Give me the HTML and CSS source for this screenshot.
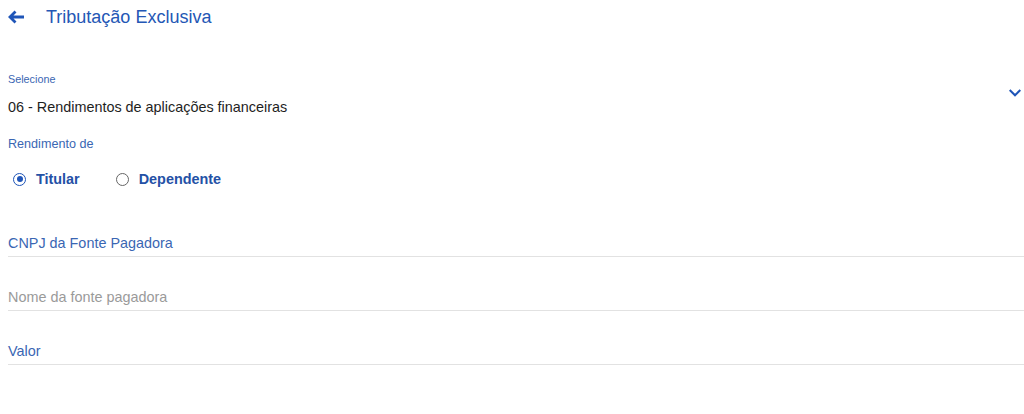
FILE: index.html
```html
<!DOCTYPE html>
<html lang="pt-BR">
<head>
  <meta charset="UTF-8" />
  <meta name="viewport" content="width=device-width, initial-scale=1.0"/>
  <title>Tributação Exclusiva</title>
  <link rel="stylesheet" href="styles.css">
</head>
<body>
<header class="topbar">
  <a class="back" href="#">
    <svg width="18" height="14" viewBox="0 0 18 14"><path d="M17 7H3 M8.5 1.5L3 7l5.5 5.5" fill="none" stroke="#1f55b8" stroke-width="2.8"/></svg>
  </a>
  <h1>Tributação Exclusiva</h1>
</header>

<main class="form">
  <div class="select">
    <div class="select-text">
      <span class="select-label">Selecione</span>
      <span class="select-value">06 - Rendimentos de aplicações financeiras</span>
    </div>
    <svg class="chevron" width="12" height="8" viewBox="6 8.3 12 8"><path d="M7.41 8.59L12 13.17l4.59-4.58L18 10l-6 6-6-6 1.41-1.41z" fill="#1f55b8"/></svg>
  </div>

  <div class="group-label">Rendimento de</div>
  <div class="radios">
    <label class="radio checked"><span class="dot"></span>Titular</label>
    <label class="radio"><span class="dot"></span>Dependente</label>
  </div>

  <div class="field first"><span class="field-label">CNPJ da Fonte Pagadora</span></div>
  <div class="field"><span class="field-label muted">Nome da fonte pagadora</span></div>
  <div class="field"><span class="field-label">Valor</span></div>
</main>
</body>
</html>
```

FILE: styles.css
```css
body { margin: 0; font-family: "Liberation Sans", Arial, sans-serif; background: #fff; color: #222; }
.topbar { height: 34px; display: flex; align-items: center; padding-left: 7px; }
.back { display: flex; width: 39px; }
.topbar h1 { margin: 0; font-size: 18px; font-weight: normal; color: #2457b5; }
.form { padding-left: 8px; }
.select { display: flex; align-items: center; margin-top: 38px; padding-right: 3px; }
.select-text { flex: 1; display: flex; flex-direction: column; }
.select-label { font-size: 10.8px; line-height: 14px; color: #3a66b3; }
.select-value { margin-top: 11px; font-size: 14.4px; line-height: 20px; color: #1e1e1e; }
.chevron { margin-top: -3px; }
.group-label { margin-top: 19px; font-size: 12.6px; line-height: 16px; color: #3a66b3; }
.radios { display: flex; margin-top: 17px; height: 20px; align-items: center; }
.radio { display: flex; align-items: center; font-size: 14.4px; font-weight: bold; color: #2451a6; margin-right: 31px; }
.dot { width: 11px; height: 11px; border: 1.6px solid #666; border-radius: 50%; margin: 0 10px 0 5px; position: relative; }
.radio.checked .dot { border-color: #1f55b8; }
.radio.checked .dot::after { content: ""; position: absolute; left: 2.5px; top: 2.5px; width: 6px; height: 6px; border-radius: 50%; background: #1f55b8; }
.field { padding-top: 30px; padding-bottom: 3px; border-bottom: 1px solid #e2e2e2; }
.field.first { margin-top: 14px; }
.field-label { display: block; font-size: 14.4px; line-height: 20px; color: #3a66b3; }
.field-label.muted { color: #9a9a9a; }
```
